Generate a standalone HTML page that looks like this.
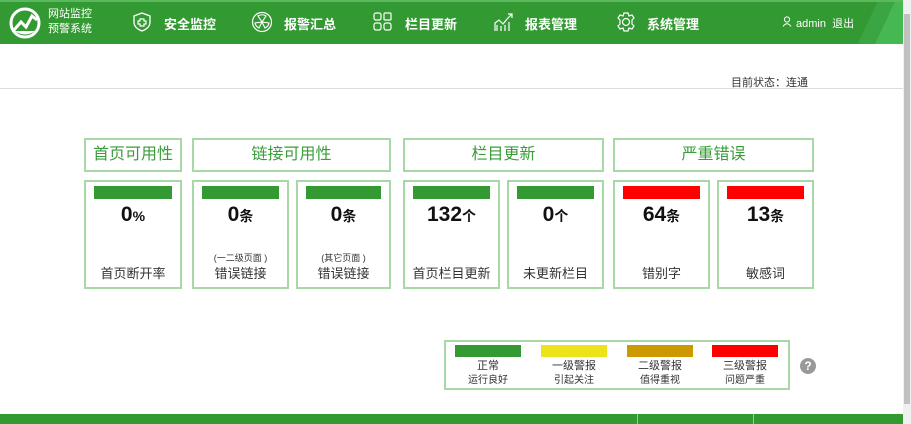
<!DOCTYPE html>
<html><head><meta charset="utf-8"><style>
*{margin:0;padding:0;box-sizing:border-box}
body{width:911px;height:424px;overflow:hidden;background:#fff;font-family:"Liberation Sans","Noto Sans CJK SC",sans-serif;position:relative;color:#222}
.hdr{position:absolute;left:0;top:0;width:903px;height:44px;background:#339933;border-top:2px solid #5cb85c}
.hdr .sl{position:absolute;right:0;top:0;width:50px;height:42px;background:linear-gradient(115deg,#339933 0 35%,#3aa542 35% 60%,#45b852 60%)}
.nav{position:absolute;top:14px;color:#fff;font-size:13px;font-weight:bold}
.ic{position:absolute;top:11px}
.abs{position:absolute}
.hb{position:absolute;top:138px;height:34px;border:2px solid #a8d8a8;color:#3a9c3a;font-size:16px;text-align:center;line-height:30px}
.cd{position:absolute;top:180px;height:109px;border:2px solid #a8d8a8;text-align:center}
.cd .bar{position:absolute;left:8px;right:8px;top:4px;height:13px;background:#339933}
.cd .n{position:absolute;left:0;right:0;top:21px;font-size:21px;font-weight:bold;color:#111}
.cd .n span{font-size:14px}
.cd .s{position:absolute;left:0;right:0;top:69px;font-size:9px;color:#333}
.cd .l{position:absolute;left:0;right:0;top:81px;font-size:13px;color:#333}
.lg{position:absolute;top:340px;left:444px;width:346px;height:50px;border:2px solid #a8d8a8}
.li{position:absolute;top:3px;width:66px;text-align:center;font-size:11px;color:#333;line-height:14px}
.li i{display:block;height:12px;margin-bottom:2px}
.li small{font-size:10px}
</style></head><body>
<div class="hdr"><div class="sl"></div></div>
<svg class="abs" style="left:8px;top:6px" width="34" height="34" viewBox="0 0 34 34"><circle cx="17" cy="17" r="14" fill="none" stroke="#fff" stroke-width="3"/><path d="M6 24 L13 16 L18 21 L24 10 L29 14" fill="none" stroke="#fff" stroke-width="3"/><path d="M7 25 Q17 32 27 25 Z" fill="#fff"/></svg>
<div class="abs" style="left:48px;top:7px;color:#fff;font-size:11px;line-height:15px">网站监控<br>预警系统</div>
<svg class="ic" style="left:131px" width="22" height="22" viewBox="0 0 22 22"><path d="M11 2 L19 5 V11 Q19 17 11 20 Q3 17 3 11 V5 Z" fill="none" stroke="#fff" stroke-width="1.3"/><path d="M9 8h4v2h2v3h-2v2H9v-2H7v-3h2z" fill="none" stroke="#fff" stroke-width="1.2"/></svg>
<div class="nav" style="left:164px">安全监控</div>
<svg class="ic" style="left:251px" width="22" height="22" viewBox="0 0 22 22"><circle cx="11" cy="11" r="9.5" fill="none" stroke="#fff" stroke-width="1.2"/><path d="M11 11 L7 5 A7 7 0 0 1 15 5Z M11 11 L4 12 A7 7 0 0 0 8 17Z M11 11 L18 12 A7 7 0 0 1 14 17Z" fill="none" stroke="#fff" stroke-width="1.1"/></svg>
<div class="nav" style="left:284px">报警汇总</div>
<svg class="ic" style="left:372px" width="22" height="22" viewBox="0 0 22 22"><g fill="none" stroke="#fff" stroke-width="1.2"><rect x="2" y="2" width="7" height="7" rx="2"/><rect x="12" y="2" width="7" height="7" rx="1"/><rect x="2" y="12" width="7" height="7" rx="2"/><rect x="12" y="12" width="7" height="7" rx="2"/></g></svg>
<div class="nav" style="left:405px">栏目更新</div>
<svg class="ic" style="left:493px" width="22" height="22" viewBox="0 0 22 22"><g fill="none" stroke="#fff" stroke-width="1.2"><path d="M2 20V12l4-3 4 4 4-5 5-5"/><path d="M15 3h4v4"/><path d="M4 20v-6M8 20v-5M12 20v-6M16 20v-9"/></g></svg>
<div class="nav" style="left:525px">报表管理</div>
<svg class="ic" style="left:615px" width="22" height="22" viewBox="0 0 22 22"><g fill="none" stroke="#fff" stroke-width="1.2"><circle cx="11" cy="11" r="3.5"/><path d="M9 2h4l1 3 3-1 2 3-2 2 0 4 2 2-2 3-3-1-1 3H9l-1-3-3 1-2-3 2-2V9L3 7l2-3 3 1z"/></g></svg>
<div class="nav" style="left:647px">系统管理</div>
<svg class="abs" style="left:782px;top:16px" width="10" height="11" viewBox="0 0 10 11"><circle cx="5" cy="3.5" r="2.6" fill="#339933" stroke="#fff"/><path d="M1 10.5Q5 5 9 10.5" fill="none" stroke="#fff"/></svg>
<div class="abs" style="left:796px;top:15px;color:#fff;font-size:11px">admin &nbsp;退出</div>
<div class="abs" style="left:731px;top:74px;font-size:11px;color:#333">目前状态：连通</div>
<div class="abs" style="left:0;top:88px;width:903px;height:1px;background:#ddd"></div>

<div class="hb" style="left:84px;width:98px">首页可用性</div>
<div class="hb" style="left:192px;width:199px">链接可用性</div>
<div class="hb" style="left:403px;width:201px">栏目更新</div>
<div class="hb" style="left:613px;width:201px">严重错误</div>

<div class="cd" style="left:84px;width:98px"><div class="bar"></div><div class="n">0<span>%</span></div><div class="l">首页断开率</div></div>
<div class="cd" style="left:192px;width:97px"><div class="bar"></div><div class="n">0<span>条</span></div><div class="s">(一二级页面 )</div><div class="l">错误链接</div></div>
<div class="cd" style="left:296px;width:95px"><div class="bar"></div><div class="n">0<span>条</span></div><div class="s">(其它页面 )</div><div class="l">错误链接</div></div>
<div class="cd" style="left:403px;width:97px"><div class="bar"></div><div class="n">132<span>个</span></div><div class="l">首页栏目更新</div></div>
<div class="cd" style="left:507px;width:97px"><div class="bar"></div><div class="n">0<span>个</span></div><div class="l">未更新栏目</div></div>
<div class="cd" style="left:613px;width:97px"><div class="bar" style="background:#f00"></div><div class="n">64<span>条</span></div><div class="l">错别字</div></div>
<div class="cd" style="left:717px;width:97px"><div class="bar" style="background:#f00"></div><div class="n">13<span>条</span></div><div class="l">敏感词</div></div>

<div class="lg">
<div class="li" style="left:9px"><i style="background:#339933"></i>正常<br><small>运行良好</small></div>
<div class="li" style="left:95px"><i style="background:#eee21a"></i>一级警报<br><small>引起关注</small></div>
<div class="li" style="left:181px"><i style="background:#cc9900"></i>二级警报<br><small>值得重视</small></div>
<div class="li" style="left:266px"><i style="background:#f00"></i>三级警报<br><small>问题严重</small></div>
</div>
<div class="abs" style="left:800px;top:358px;width:16px;height:16px;border-radius:50%;background:#999;color:#fff;font-size:12px;font-weight:bold;text-align:center;line-height:16px">?</div>

<div class="abs" style="left:0;top:414px;width:903px;height:10px;background:#339933"></div>
<div class="abs" style="left:637px;top:414px;width:1px;height:10px;background:#9c9"></div>
<div class="abs" style="left:753px;top:414px;width:1px;height:10px;background:#9c9"></div>
<div class="abs" style="left:903px;top:0;width:8px;height:424px;background:#f0f0f0"></div>
<div class="abs" style="left:904px;top:14px;width:6px;height:390px;background:#c1c1c1"></div>
</body></html>
